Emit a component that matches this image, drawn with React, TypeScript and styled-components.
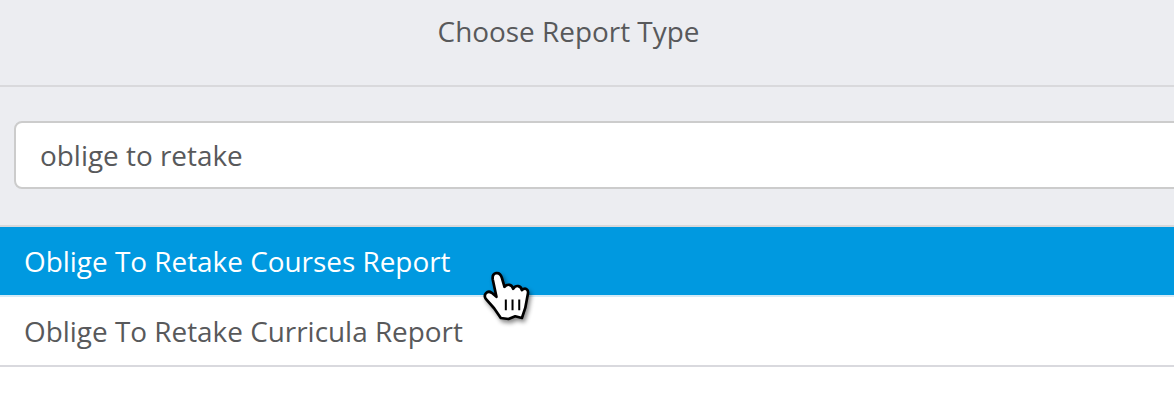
import styled, { createGlobalStyle } from "styled-components";

const GlobalStyle = createGlobalStyle`
  html, body {
    margin: 0;
    padding: 0;
    background: #fff;
    overflow: hidden;
  }
`;

function HandCursor() {
  return (
    <CursorSvg viewBox="120 50 170 170" aria-hidden="true">
      <path
        d="M185 205 L165 176 L141 149 C131 135 145 121 158 130 L172 142 L161 90 C158 68 182 64 188 85 L196 112 C205 102 218 105 222 118 C230 105 245 108 248 122 C258 112 268 120 266 132 L258 175 L248 205 L228 200 L208 208 Z"
        fill="#fff"
        stroke="#000"
        strokeWidth="8"
        strokeLinejoin="round"
      />
      <path d="M200 150 V182 M220 150 V182 M240 150 V182" stroke="#000" strokeWidth="6" fill="none" />
    </CursorSvg>
  );
}

export default function App() {
  return (
    <Page>
      <GlobalStyle />
      <Header>Choose Report Type</Header>
      <SearchBar>
        <SearchInput readOnly value="oblige to retake" />
      </SearchBar>
      <ResultList>
        <ResultRow $active>
          Oblige To Retake Courses Report
          <HandCursor />
        </ResultRow>
        <ResultRow>Oblige To Retake Curricula Report</ResultRow>
      </ResultList>
    </Page>
  );
}

const Page = styled.div`
  width: 1174px;
  height: 402px;
  overflow: hidden;
  background: #fff;
  color: #58595b;
  font-family: "Open Sans", "Liberation Sans", sans-serif;
  font-size: 27.9px;
`;

const Header = styled.div`
  height: 85px;
  box-sizing: border-box;
  display: flex;
  justify-content: center;
  align-items: center;
  padding: 0 37px 24px 0;
  background: #ecedf1;
`;

const SearchBar = styled.div`
  height: 142px;
  box-sizing: border-box;
  padding: 34px 0 0 14px;
  background: #ecedf1;
  border-top: 2px solid #d9d9dc;
  border-bottom: 2px solid #d8d8da;
`;

const SearchInput = styled.input`
  display: block;
  width: 1200px;
  height: 68px;
  box-sizing: border-box;
  padding: 0 24px;
  border: 2px solid #cccccc;
  border-radius: 8px;
  outline: none;
  background: #fff;
  color: #58595b;
  font: inherit;
`;

const ResultList = styled.div`
  display: flex;
  flex-direction: column;
`;

const ResultRow = styled.div<{ $active?: boolean }>`
  position: relative;
  z-index: ${({ $active }) => ($active ? 1 : 0)};
  height: 70px;
  box-sizing: border-box;
  display: flex;
  align-items: center;
  padding: 0 24px;
  background: ${({ $active }) => ($active ? "#0099e0" : "#fff")};
  color: ${({ $active }) => ($active ? "#fff" : "#58595b")};
  border-bottom: 2px solid ${({ $active }) => ($active ? "#d4eaf6" : "#d9d9de")};
`;

const CursorSvg = styled.svg`
  position: absolute;
  left: 479px;
  top: 39px;
  width: 57px;
  height: 57px;
  filter: drop-shadow(2px 3px 2px rgba(0, 0, 0, 0.45));
`;
